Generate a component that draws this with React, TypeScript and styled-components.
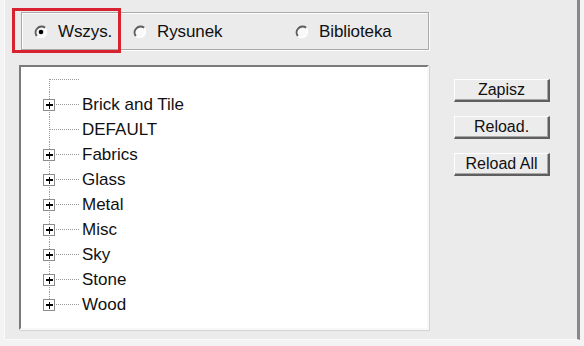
import React from 'react';
import styled, { createGlobalStyle } from 'styled-components';

const GlobalStyle = createGlobalStyle`
  html, body {
    margin: 0;
    padding: 0;
    background: #f3f3f3;
  }
  body {
    font-family: "Liberation Sans", Arial, sans-serif;
    color: #111;
  }
`;

const categories = [
  { name: 'Brick and Tile', expandable: true },
  { name: 'DEFAULT', expandable: false },
  { name: 'Fabrics', expandable: true },
  { name: 'Glass', expandable: true },
  { name: 'Metal', expandable: true },
  { name: 'Misc', expandable: true },
  { name: 'Sky', expandable: true },
  { name: 'Stone', expandable: true },
  { name: 'Wood', expandable: true },
];

const Radio = ({ checked }: { checked?: boolean }) => (
  <RadioMark width="14" height="14" viewBox="0 0 14 14">
    <circle cx="7" cy="7" r="6" fill="#f9f9f9" />
    <path d="M2.8 11.2 A6 6 0 0 1 11.2 2.8" fill="none" stroke="#5e5e5e" strokeWidth="2" />
    <path d="M11.2 2.8 A6 6 0 0 1 2.8 11.2" fill="none" stroke="#ffffff" strokeWidth="1.4" />
    {checked && <circle cx="7" cy="7" r="2.3" fill="#000" />}
  </RadioMark>
);

type Branch = { first?: boolean; last?: boolean; expandable: boolean };

const TreeLines = ({ first, last, expandable }: Branch) => (
  <Gutter width="60" height="25" viewBox="0 0 60 25" shapeRendering="crispEdges">
    <line
      x1="28.5"
      x2="28.5"
      y1={first ? 12 : 0}
      y2={last ? 12.5 : 25}
      stroke="#9a9a9a"
      strokeDasharray="1 1"
    />
    <line x1="29" x2="59" y1="12.5" y2="12.5" stroke="#9a9a9a" strokeDasharray="1 1" />
    {expandable && (
      <g>
        <rect x="22.5" y="7.5" width="11" height="11" fill="#fff" stroke="#8c8c8c" />
        <line x1="25" x2="32" y1="13" y2="13" stroke="#000" strokeWidth="1.6" />
        <line x1="28.5" x2="28.5" y1="9.5" y2="16.5" stroke="#000" strokeWidth="1.6" />
      </g>
    )}
  </Gutter>
);

const App = () => {
  return (
    <>
      <GlobalStyle />
      <Page>
        <Frame>
          <LeftColumn>
            <SourceGroup>
              <Option $width={99}>
                <Radio checked />
                <OptionLabel>Wszys.</OptionLabel>
              </Option>
              <Option $width={162}>
                <Radio />
                <OptionLabel>Rysunek</OptionLabel>
              </Option>
              <Option>
                <Radio />
                <OptionLabel>Biblioteka</OptionLabel>
              </Option>
            </SourceGroup>

            <TreeBox>
              <TreeRow>
                <TreeLines first expandable={false} />
              </TreeRow>
              {categories.map((c, i) => (
                <TreeRow key={c.name}>
                  <TreeLines expandable={c.expandable} last={i === categories.length - 1} />
                  <TreeLabel>{c.name}</TreeLabel>
                </TreeRow>
              ))}
            </TreeBox>
          </LeftColumn>

          <ButtonColumn>
            <Button>Zapisz</Button>
            <Button>Reload.</Button>
            <Button>Reload All</Button>
          </ButtonColumn>
        </Frame>
        <Highlight />
      </Page>
    </>
  );
};

const Page = styled.div`
  position: relative;
  width: 584px;
  height: 346px;
  overflow: hidden;
  background: #f3f3f3;
`;

const Frame = styled.div`
  display: flex;
  align-items: flex-start;
  margin-left: 4px;
  width: 576px;
  height: 340px;
  padding-left: 14px;
  box-sizing: border-box;
  background: #ebebeb;
  border-left: 1px solid #fbfbfb;
  border-right: 3px solid #85898d;
  border-bottom: 1px solid #fafafa;
`;

const LeftColumn = styled.div`
  display: flex;
  flex-direction: column;
  width: 410px;
`;

const SourceGroup = styled.div`
  display: flex;
  align-items: center;
  margin: 12px 0 0 2px;
  height: 38px;
  padding-left: 12px;
  box-sizing: border-box;
  border: 1px solid #a9a9a9;
  box-shadow: inset 1px 1px 0 #fdfdfd, 1px 1px 0 #fdfdfd;
`;

const Option = styled.div<{ $width?: number }>`
  display: flex;
  align-items: center;
  gap: 10px;
  width: ${(p) => (p.$width ? `${p.$width}px` : 'auto')};
  padding-top: 2px;
`;

const RadioMark = styled.svg`
  display: block;
  flex: none;
`;

const OptionLabel = styled.span`
  font-size: 17px;
  letter-spacing: -0.1px;
`;

const TreeBox = styled.div`
  margin-top: 15px;
  width: 410px;
  height: 265px;
  box-sizing: border-box;
  background: #fff;
  border-top: 2px solid #7b7b7b;
  border-left: 2px solid #7b7b7b;
  border-right: 2px solid #f8f8f8;
  border-bottom: 2px solid #f8f8f8;
  box-shadow: 1px 1px 0 #d4d4d4;
`;

const TreeRow = styled.div`
  display: flex;
  align-items: center;
  height: 25px;
`;

const Gutter = styled.svg`
  display: block;
  flex: none;
`;

const TreeLabel = styled.span`
  font-size: 17px;
  padding-left: 1px;
`;

const ButtonColumn = styled.div`
  display: flex;
  flex-direction: column;
  gap: 14px;
  margin: 79px 0 0 25px;
`;

const Button = styled.button`
  width: 96px;
  height: 23px;
  padding: 0 0 1px;
  font-family: "Liberation Sans", Arial, sans-serif;
  font-size: 16px;
  color: #111;
  background: #ececec;
  border: none;
  border-top: 1px solid #fdfdfd;
  border-left: 1px solid #fdfdfd;
  border-right: 2px solid #5f5f5f;
  border-bottom: 2px solid #5f5f5f;
  box-shadow: inset -1px -1px 0 #a8a8a8;
`;

const Highlight = styled.div`
  position: absolute;
  left: 12px;
  top: 8px;
  width: 109px;
  height: 45px;
  box-sizing: border-box;
  border: 3px solid #d7232f;
  pointer-events: none;
`;

export default App;
